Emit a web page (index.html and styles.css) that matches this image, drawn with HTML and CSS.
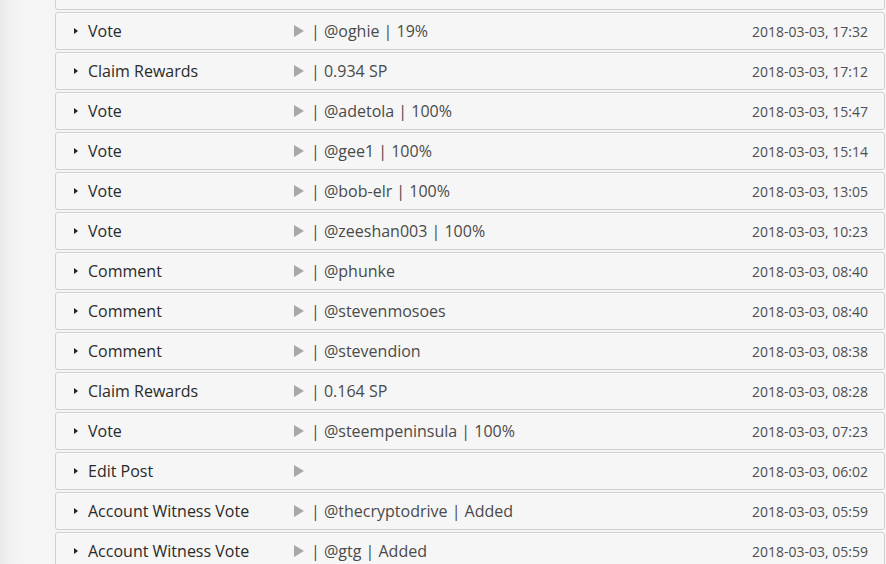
FILE: index.html
```html
<!DOCTYPE html>
<html>
<head>
<meta charset="utf-8">
<link rel="stylesheet" href="styles.css">
</head>
<body>
<div class="page">
  <div class="side"></div>
  <div class="list">
    <div class="row"></div>
    <div class="row"><span class="caret"></span><span class="label">Vote</span><span class="play"></span><span class="value">| @oghie | 19%</span><span class="date">2018-03-03, 17:32</span></div>
    <div class="row"><span class="caret"></span><span class="label">Claim Rewards</span><span class="play"></span><span class="value">| 0.934 SP</span><span class="date">2018-03-03, 17:12</span></div>
    <div class="row"><span class="caret"></span><span class="label">Vote</span><span class="play"></span><span class="value">| @adetola | 100%</span><span class="date">2018-03-03, 15:47</span></div>
    <div class="row"><span class="caret"></span><span class="label">Vote</span><span class="play"></span><span class="value">| @gee1 | 100%</span><span class="date">2018-03-03, 15:14</span></div>
    <div class="row"><span class="caret"></span><span class="label">Vote</span><span class="play"></span><span class="value">| @bob-elr | 100%</span><span class="date">2018-03-03, 13:05</span></div>
    <div class="row"><span class="caret"></span><span class="label">Vote</span><span class="play"></span><span class="value">| @zeeshan003 | 100%</span><span class="date">2018-03-03, 10:23</span></div>
    <div class="row"><span class="caret"></span><span class="label">Comment</span><span class="play"></span><span class="value">| @phunke</span><span class="date">2018-03-03, 08:40</span></div>
    <div class="row"><span class="caret"></span><span class="label">Comment</span><span class="play"></span><span class="value">| @stevenmosoes</span><span class="date">2018-03-03, 08:40</span></div>
    <div class="row"><span class="caret"></span><span class="label">Comment</span><span class="play"></span><span class="value">| @stevendion</span><span class="date">2018-03-03, 08:38</span></div>
    <div class="row"><span class="caret"></span><span class="label">Claim Rewards</span><span class="play"></span><span class="value">| 0.164 SP</span><span class="date">2018-03-03, 08:28</span></div>
    <div class="row"><span class="caret"></span><span class="label">Vote</span><span class="play"></span><span class="value">| @steempeninsula | 100%</span><span class="date">2018-03-03, 07:23</span></div>
    <div class="row"><span class="caret"></span><span class="label">Edit Post</span><span class="play"></span><span class="value"></span><span class="date">2018-03-03, 06:02</span></div>
    <div class="row"><span class="caret"></span><span class="label">Account Witness Vote</span><span class="play"></span><span class="value">| @thecryptodrive | Added</span><span class="date">2018-03-03, 05:59</span></div>
    <div class="row"><span class="caret"></span><span class="label">Account Witness Vote</span><span class="play"></span><span class="value">| @gtg | Added</span><span class="date">2018-03-03, 05:59</span></div>
  </div>
</div>
</body>
</html>
```
FILE: styles.css
```css
html, body {
  margin: 0;
  padding: 0;
  height: 100%;
  overflow: hidden;
  background: #f5f5f5;
  font-family: "Open Sans", "DejaVu Sans", sans-serif;
}
.page {
  display: flex;
  height: 564px;
  overflow: hidden;
}
.side {
  width: 55px;
  flex: none;
  background: linear-gradient(to right, #e9e9e9 0px, #f1f1f1 10px, #f5f5f5 20px);
}
.list {
  flex: 1;
  display: flex;
  flex-direction: column;
  gap: 2px;
  margin-top: -28px;
  margin-right: 1px;
}
.row {
  height: 36px;
  flex: none;
  display: flex;
  align-items: center;
  border: 1px solid #cfcfcf;
  border-radius: 3px;
  background: #f6f6f6;
  box-shadow: inset 0 1px 0 #fbfbfb;
  padding: 0 16px 0 18px;
}
.caret {
  width: 0;
  height: 0;
  border-top: 3.5px solid transparent;
  border-bottom: 3.5px solid transparent;
  border-left: 4px solid #222;
  margin-right: 10px;
  flex: none;
}
.label {
  width: 206px;
  flex: none;
  font-size: 16px;
  color: #2a2a2a;
}
.play {
  width: 0;
  height: 0;
  border-top: 6.5px solid transparent;
  border-bottom: 6.5px solid transparent;
  border-left: 10px solid #a8a8a8;
  margin-right: 7px;
  flex: none;
}
.value {
  flex: 1;
  font-size: 16px;
  color: #4a4a4a;
}
.date {
  font-size: 14px;
  color: #4f4f4f;
}
```
